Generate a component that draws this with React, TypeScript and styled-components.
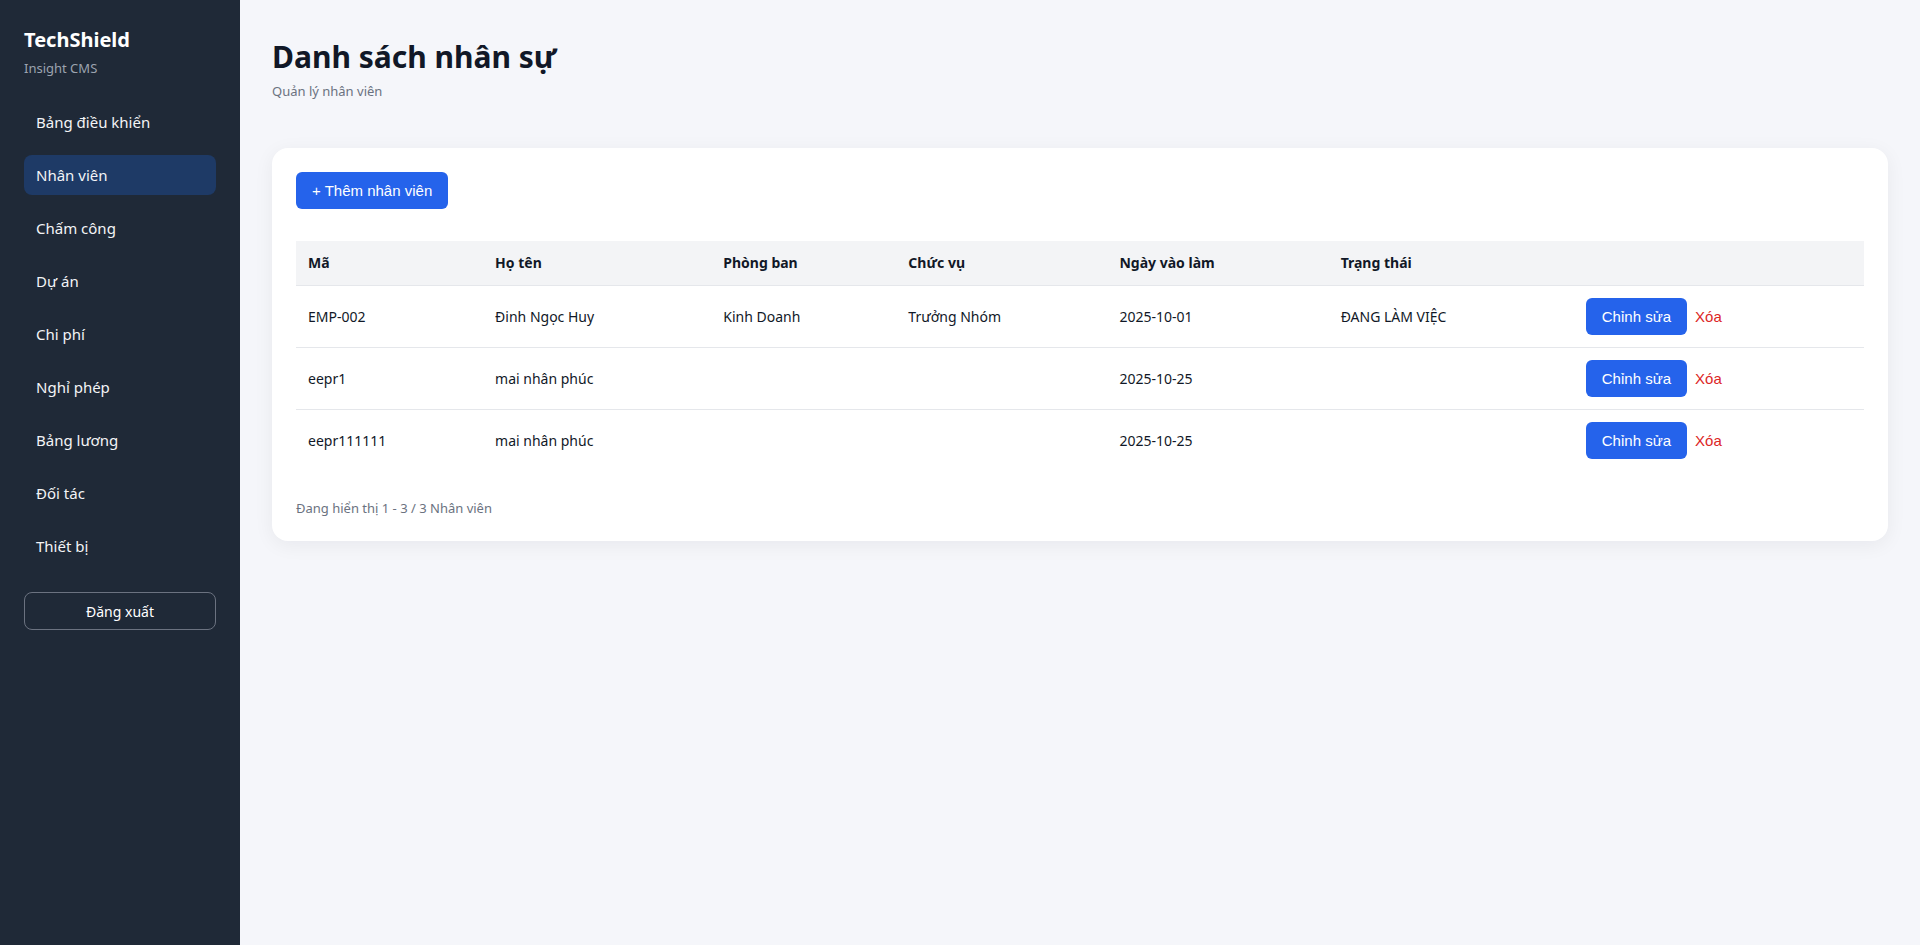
import React from "react";
import styled, { createGlobalStyle } from "styled-components";

const GlobalStyle = createGlobalStyle`
  html, body { margin: 0; padding: 0; }
  body {
    font-family: "Noto Sans", "Open Sans", sans-serif;
    background: #f5f6fa;
    color: #111827;
  }
  * { box-sizing: border-box; }
`;

const Layout = styled.div`
  display: flex;
  min-height: 945px;
`;

const Sidebar = styled.aside`
  width: 240px;
  flex-shrink: 0;
  background: #1f2937;
  color: #ffffff;
  padding: 24px;
  display: flex;
  flex-direction: column;
`;

const Brand = styled.div`
  font-size: 20px;
  font-weight: 700;
  line-height: 32px;
`;

const BrandSub = styled.div`
  font-size: 13px;
  color: #9ca3af;
  line-height: 18px;
  margin-top: 3px;
  margin-bottom: 25px;
`;

const Nav = styled.nav`
  display: flex;
  flex-direction: column;
  gap: 13px;
`;

const NavItem = styled.a<{ $active?: boolean }>`
  display: block;
  height: 40px;
  line-height: 40px;
  padding: 0 12px;
  border-radius: 8px;
  font-size: 15px;
  color: #f3f4f6;
  background: ${(p) => (p.$active ? "#1e3a66" : "transparent")};
  text-decoration: none;
  cursor: pointer;
`;

const Logout = styled.button`
  margin-top: 26px;
  height: 38px;
  width: 100%;
  background: transparent;
  border: 1px solid #6b7280;
  border-radius: 8px;
  color: #ffffff;
  font-family: "Noto Sans", sans-serif;
  font-size: 14px;
  cursor: pointer;
`;

const Main = styled.main`
  flex: 1;
  padding: 32px;
  display: flex;
  flex-direction: column;
`;

const Title = styled.h1`
  margin: 0;
  font-size: 30px;
  font-weight: 700;
  line-height: 50px;
  color: #111827;
`;

const Subtitle = styled.div`
  font-size: 13px;
  color: #6b7280;
  line-height: 18px;
  margin-bottom: 48px;
`;

const Card = styled.section`
  background: #ffffff;
  border-radius: 16px;
  box-shadow: 0 4px 20px rgba(15, 23, 42, 0.06);
  padding: 24px;
`;

const PrimaryButton = styled.button`
  background: #2563eb;
  color: #ffffff;
  border: none;
  border-radius: 6px;
  height: 37px;
  padding: 0 16px;
  font-family: "Liberation Sans", Arial, sans-serif;
  font-size: 15px;
  cursor: pointer;
`;

const Table = styled.table`
  width: 100%;
  border-collapse: collapse;
  margin-top: 32px;
  table-layout: fixed;
  font-size: 14px;
`;

const Th = styled.th`
  background: #f3f4f6;
  text-align: left;
  font-weight: 700;
  height: 44px;
  padding: 0 12px;
  border-bottom: 1px solid #e5e7eb;
  color: #111827;
`;

const Td = styled.td<{ $last?: boolean }>`
  padding: 12px;
  height: 62px;
  border-bottom: ${(p) => (p.$last ? "none" : "1px solid #e5e7eb")};
  color: #111827;
  vertical-align: middle;
`;

const Actions = styled.div`
  display: flex;
  align-items: center;
  gap: 8px;
`;

const DangerLink = styled.button`
  background: none;
  border: none;
  padding: 0;
  color: #dc2626;
  font-family: "Liberation Sans", Arial, sans-serif;
  font-size: 15px;
  cursor: pointer;
`;

const Footer = styled.div`
  margin-top: 28px;
  font-size: 13px;
  color: #6b7280;
  line-height: 18px;
`;

const navItems = [
  "Bảng điều khiển",
  "Nhân viên",
  "Chấm công",
  "Dự án",
  "Chi phí",
  "Nghỉ phép",
  "Bảng lương",
  "Đối tác",
  "Thiết bị",
];

const cols = [
  { label: "Mã", w: 187 },
  { label: "Họ tên", w: 228 },
  { label: "Phòng ban", w: 185 },
  { label: "Chức vụ", w: 211 },
  { label: "Ngày vào làm", w: 221 },
  { label: "Trạng thái", w: 245 },
  { label: "", w: 290 },
];

const rows = [
  ["EMP-002", "Đinh Ngọc Huy", "Kinh Doanh", "Trưởng Nhóm", "2025-10-01", "ĐANG LÀM VIỆC"],
  ["eepr1", "mai nhân phúc", "", "", "2025-10-25", ""],
  ["eepr111111", "mai nhân phúc", "", "", "2025-10-25", ""],
];

export default function App() {
  return (
    <>
      <GlobalStyle />
      <Layout>
        <Sidebar>
          <Brand>TechShield</Brand>
          <BrandSub>Insight CMS</BrandSub>
          <Nav>
            {navItems.map((n) => (
              <NavItem key={n} $active={n === "Nhân viên"}>
                {n}
              </NavItem>
            ))}
          </Nav>
          <Logout>Đăng xuất</Logout>
        </Sidebar>
        <Main>
          <Title>Danh sách nhân sự</Title>
          <Subtitle>Quản lý nhân viên</Subtitle>
          <Card>
            <PrimaryButton>+ Thêm nhân viên</PrimaryButton>
            <Table>
              <colgroup>
                {cols.map((c, i) => (
                  <col key={i} style={{ width: c.w }} />
                ))}
              </colgroup>
              <thead>
                <tr>
                  {cols.map((c, i) => (
                    <Th key={i}>{c.label}</Th>
                  ))}
                </tr>
              </thead>
              <tbody>
                {rows.map((r, ri) => {
                  const last = ri === rows.length - 1;
                  return (
                    <tr key={ri}>
                      {r.map((v, ci) => (
                        <Td key={ci} $last={last}>
                          {v}
                        </Td>
                      ))}
                      <Td $last={last}>
                        <Actions>
                          <PrimaryButton>Chỉnh sửa</PrimaryButton>
                          <DangerLink>Xóa</DangerLink>
                        </Actions>
                      </Td>
                    </tr>
                  );
                })}
              </tbody>
            </Table>
            <Footer>Đang hiển thị 1 - 3 / 3 Nhân viên</Footer>
          </Card>
        </Main>
      </Layout>
    </>
  );
}
